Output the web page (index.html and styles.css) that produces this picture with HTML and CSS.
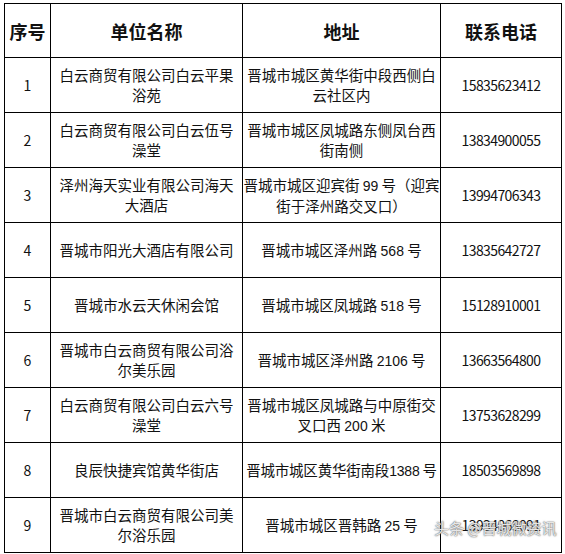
FILE: index.html
```html
<!DOCTYPE html>
<html lang="zh-CN">
<head>
<meta charset="utf-8">
<link rel="stylesheet" href="styles.css">
</head>
<body>
<div class="page">
<table class="list">
  <colgroup>
    <col class="c-no"><col class="c-name"><col class="c-addr"><col class="c-tel">
  </colgroup>
  <thead>
    <tr class="head">
      <th>序号</th><th>单位名称</th><th>地址</th><th>联系电话</th>
    </tr>
  </thead>
  <tbody>
    <tr><td class="no">1</td><td>白云商贸有限公司白云平果浴苑</td><td class="addr">晋城市城区黄华街中段西侧白云社区内</td><td class="tel">15835623412</td></tr>
    <tr><td class="no">2</td><td>白云商贸有限公司白云伍号澡堂</td><td class="addr">晋城市城区凤城路东侧凤台西街南侧</td><td class="tel">13834900055</td></tr>
    <tr><td class="no">3</td><td>泽州海天实业有限公司海天大酒店</td><td class="addr">晋城市城区迎宾街 <span class="num">99</span> 号（迎宾街于泽州路交叉口）</td><td class="tel">13994706343</td></tr>
    <tr><td class="no">4</td><td>晋城市阳光大酒店有限公司</td><td class="addr">晋城市城区泽州路 <span class="num">568</span> 号</td><td class="tel">13835642727</td></tr>
    <tr><td class="no">5</td><td>晋城市水云天休闲会馆</td><td class="addr">晋城市城区凤城路 <span class="num">518</span> 号</td><td class="tel">15128910001</td></tr>
    <tr><td class="no">6</td><td>晋城市白云商贸有限公司浴尔美乐园</td><td class="addr">晋城市城区泽州路 <span class="num">2106</span> 号</td><td class="tel">13663564800</td></tr>
    <tr><td class="no">7</td><td>白云商贸有限公司白云六号澡堂</td><td class="addr">晋城市城区凤城路与中原街交叉口西 <span class="num">200</span> 米</td><td class="tel">13753628299</td></tr>
    <tr><td class="no">8</td><td>良辰快捷宾馆黄华街店</td><td class="addr tight">晋城市城区黄华街南段<span class="num">1388</span> 号</td><td class="tel">18503569898</td></tr>
    <tr><td class="no">9</td><td>晋城市白云商贸有限公司美尔浴乐园</td><td class="addr">晋城市城区晋韩路 <span class="num">25</span> 号</td><td class="tel">13934068091</td></tr>
  </tbody>
</table>
<div class="mark">头条 @晋城微资讯</div>
</div>
</body>
</html>
```
FILE: styles.css
```css
html, body {
  margin: 0;
  padding: 0;
  background: #fff;
}
.page {
  position: relative;
  width: 565px;
  height: 554px;
  overflow: hidden;
  padding: 3px 0 0 4px;
  box-sizing: border-box;
}
.list {
  border-collapse: collapse;
  table-layout: fixed;
  width: 557px;
  font-family: "Noto Sans CJK SC", "Noto Sans", sans-serif;
  color: #111;
}
.c-no { width: 46px; }
.c-name { width: 192px; }
.c-addr { width: 198px; }
.c-tel { width: 121px; }
.list th, .list td {
  border: 1.5px solid #000;
  text-align: center;
  vertical-align: middle;
  padding: 0 4px;
  line-height: 20px;
}
.list th {
  font-size: 18px;
  font-weight: 700;
  height: 53px;
  padding: 0;
}
.list td {
  font-size: 14.5px;
  font-weight: 400;
  height: 54px;
}
.list td.no {
  padding: 0;
  font-size: 14px;
}
.list td.addr {
  padding: 0;
}
.list td.tel {
  padding: 0;
  letter-spacing: -0.6px;
  font-size: 14px;
}
.list td.tight {
  white-space: nowrap;
  letter-spacing: -0.2px;
}
.num {
  font-family: "Liberation Sans", Arial, sans-serif;
  font-size: 14px;
}
.mark {
  position: absolute;
  left: 434px;
  top: 518px;
  font-family: "Noto Sans CJK SC", sans-serif;
  font-size: 15px;
  line-height: 20px;
  color: rgba(255, 255, 255, 0.85);
  text-shadow: 0 0 1px #555, 0 0 2px #777;
  white-space: nowrap;
}
```
